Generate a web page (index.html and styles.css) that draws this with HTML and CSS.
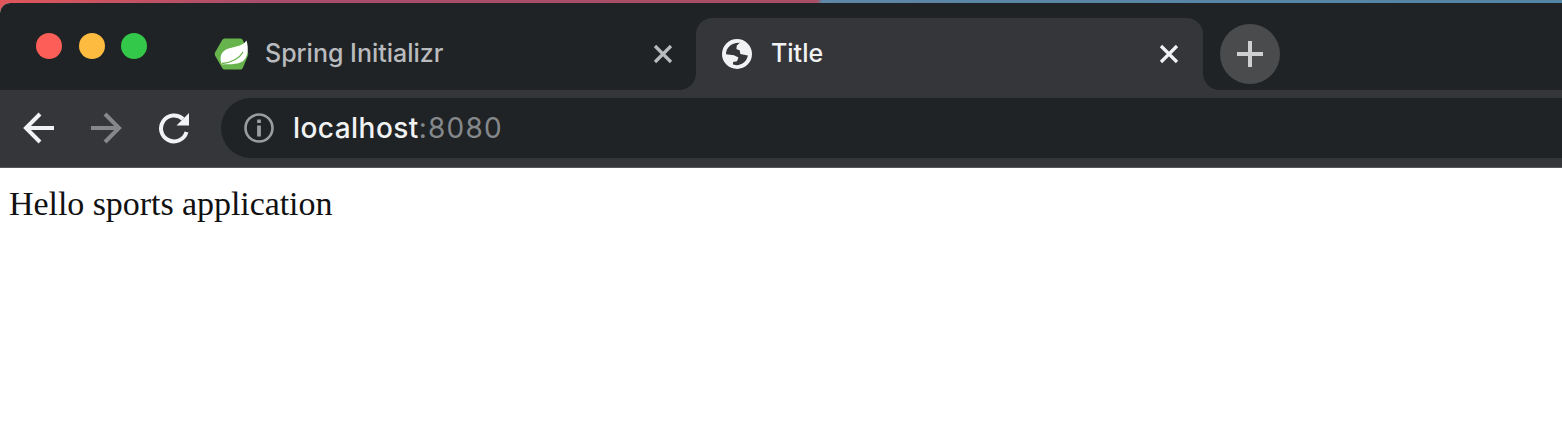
FILE: index.html
```html
<!DOCTYPE html>
<html lang="en">
<head>
<meta charset="utf-8">
<title>Title</title>
<link rel="stylesheet" href="styles.css">
</head>
<body>
<div class="desktop">
  <div class="window">
    <header class="tabstrip">
      <div class="lights"><i class="light red"></i><i class="light yellow"></i><i class="light green"></i></div>
      <div class="tab">
        <svg class="spring" viewBox="0 0 36 34" width="36" height="34"><path d="M10.500 1.500H26.500Q28 1.500 28.800 3L34 15.500Q34.500 17 34 18.500L28.800 31Q28 32.500 26.500 32.500H10.500Q9 32.500 8.200 31L1 18.500Q.5 17 1 15.500L8.200 3Q9 1.500 10.500 1.500Z" fill="#68b44c"/><path d="M32.500 3.500C35 12 34 20.500 28.500 24.500C22.500 28 14 27 8 27.500C5.500 22 6 16 12 12.500C19 9.500 28 10 32.500 3.500Z" fill="#fff"/><path d="M8 26.500C17 25.500 25 22 29 15" fill="none" stroke="#68b44c" stroke-width="1.300"/></svg>
        <span class="label spring-label">Spring Initializr</span>
        <svg class="close" viewBox="0 0 20 20" width="20" height="20"><path d="M2 2L18 18M18 2L2 18"/></svg>
      </div>
      <div class="tab active">
        <svg class="globe" viewBox="0 0 30 30" width="30" height="30"><circle cx="15" cy="15" r="15" fill="#f1f2f4"/><path d="M17.800 3.800L14.800 6.500L14.400 10L17.800 11.600L18.300 15L25.800 16.500C25 22 20.500 26 14.500 26.200L11 25.600V23L15 22.200L16.500 18.600L12 16.200L4 15.200C4 9 9 3.500 17.800 3.800Z" fill="#35363a"/></svg>
        <span class="label">Title</span>
        <svg class="close" viewBox="0 0 20 20" width="20" height="20"><path d="M2 2L18 18M18 2L2 18"/></svg>
      </div>
      <button class="newtab" aria-label="New tab"><svg viewBox="0 0 26 26" width="26" height="26"><path d="M13 0V26M0 13H26" stroke="#cfd0d2" stroke-width="4" fill="none"/></svg></button>
    </header>
    <nav class="toolbar">
      <svg class="nav-icon" viewBox="0 0 32 32" width="32" height="32"><path d="M32 16H4M18 2L4 16L18 30"/></svg>
      <svg class="nav-icon forward" viewBox="0 0 32 32" width="32" height="32"><path d="M1 16H29M15 2L29 16L15 30"/></svg>
      <svg class="nav-icon reload" viewBox="0 0 32 32" width="32" height="32"><path d="M28.500 20A13 13 0 1 1 25 7"/><path class="head" d="M31 1V13.500H18.500Z"/></svg>
      <div class="address">
        <svg class="info" viewBox="0 0 30 30" width="30" height="30"><circle cx="15" cy="15" r="13.500" fill="none" stroke="#9a9c9f" stroke-width="2.600"/><path d="M15 6.500V10M15 12.500V23.500" fill="none" stroke="#9a9c9f" stroke-width="3.800"/></svg>
        <span class="host">localhost</span><span class="port">:8080</span>
      </div>
    </nav>
    <main class="page">Hello sports application</main>
  </div>
</div>
</body>
</html>
```
FILE: styles.css
```css
* { box-sizing: border-box; }
body { margin: 0; overflow: hidden; font-family: Inter, "Liberation Sans", sans-serif; }
.desktop { height: 446px; padding-top: 3px; background: linear-gradient(90deg, #e0565a 0, #a84e6b 260px, #a84e66 817px, #5e86a6 822px, #5385a5 100%); }
.window { height: 443px; border-top-left-radius: 10px; overflow: hidden; background: #fff; }
.tabstrip { height: 87px; display: flex; background: #1f2325; padding: 15px 0 0 36px; }
.lights { display: flex; gap: 16.500px; padding-top: 15px; width: 160px; }
.light { width: 26px; height: 26px; border-radius: 50%; }
.red { background: #fd5e58; }
.yellow { background: #fdbc40; }
.green { background: #34c84a; }
.tab { width: 500px; height: 72px; display: flex; align-items: center; padding: 0 23px 0 18px; color: #b9bbbe; position: relative; }
.tab.active { width: 507px; padding: 0 24px 0 26px; background: #35363a; border-radius: 16px 16px 0 0; color: #f1f2f4; }
.active::before, .active::after { content: ""; position: absolute; bottom: 0; width: 16px; height: 16px; }
.active::before { right: 100%; background: radial-gradient(circle at 0 0, transparent 15.500px, #35363a 16px); }
.active::after { left: 100%; background: radial-gradient(circle at 100% 0, transparent 15.500px, #35363a 16px); }
.label { flex: 1; font-size: 25px; line-height: 32px; font-weight: 500; white-space: nowrap; margin: 0 0 2px 19px; }
.spring-label { margin-left: 15px; }
.close { fill: none; stroke: currentColor; stroke-width: 3.200; }
.newtab { width: 60px; height: 60px; margin: 6px 0 0 17px; padding: 0; border: 0; border-radius: 50%; background: #4a4b4d; display: flex; align-items: center; justify-content: center; }
.toolbar { height: 78px; display: flex; align-items: center; gap: 36px; padding: 0 0 1px 22px; background: #35363a; border-bottom: 1px solid #55565a; }
.nav-icon { flex: none; fill: none; stroke: #f1f2f4; stroke-width: 4; }
.forward { stroke: #85878a; }
.reload .head { fill: #f1f2f4; stroke: none; }
.address { flex: 1; height: 60px; margin-left: -5px; padding-left: 23px; display: flex; align-items: center; border-radius: 30px 0 0 30px; background: #1f2325; font-size: 28px; line-height: 36px; }
.info { margin-right: 19px; }
.host { color: #f1f2f4; font-weight: 500; letter-spacing: .45px; }
.port { color: #85888b; letter-spacing: 1.200px; }
.page { padding: 16px 9px; font-family: "Liberation Serif", serif; font-size: 34px; line-height: 40px; letter-spacing: -.06px; color: #111; }
```
